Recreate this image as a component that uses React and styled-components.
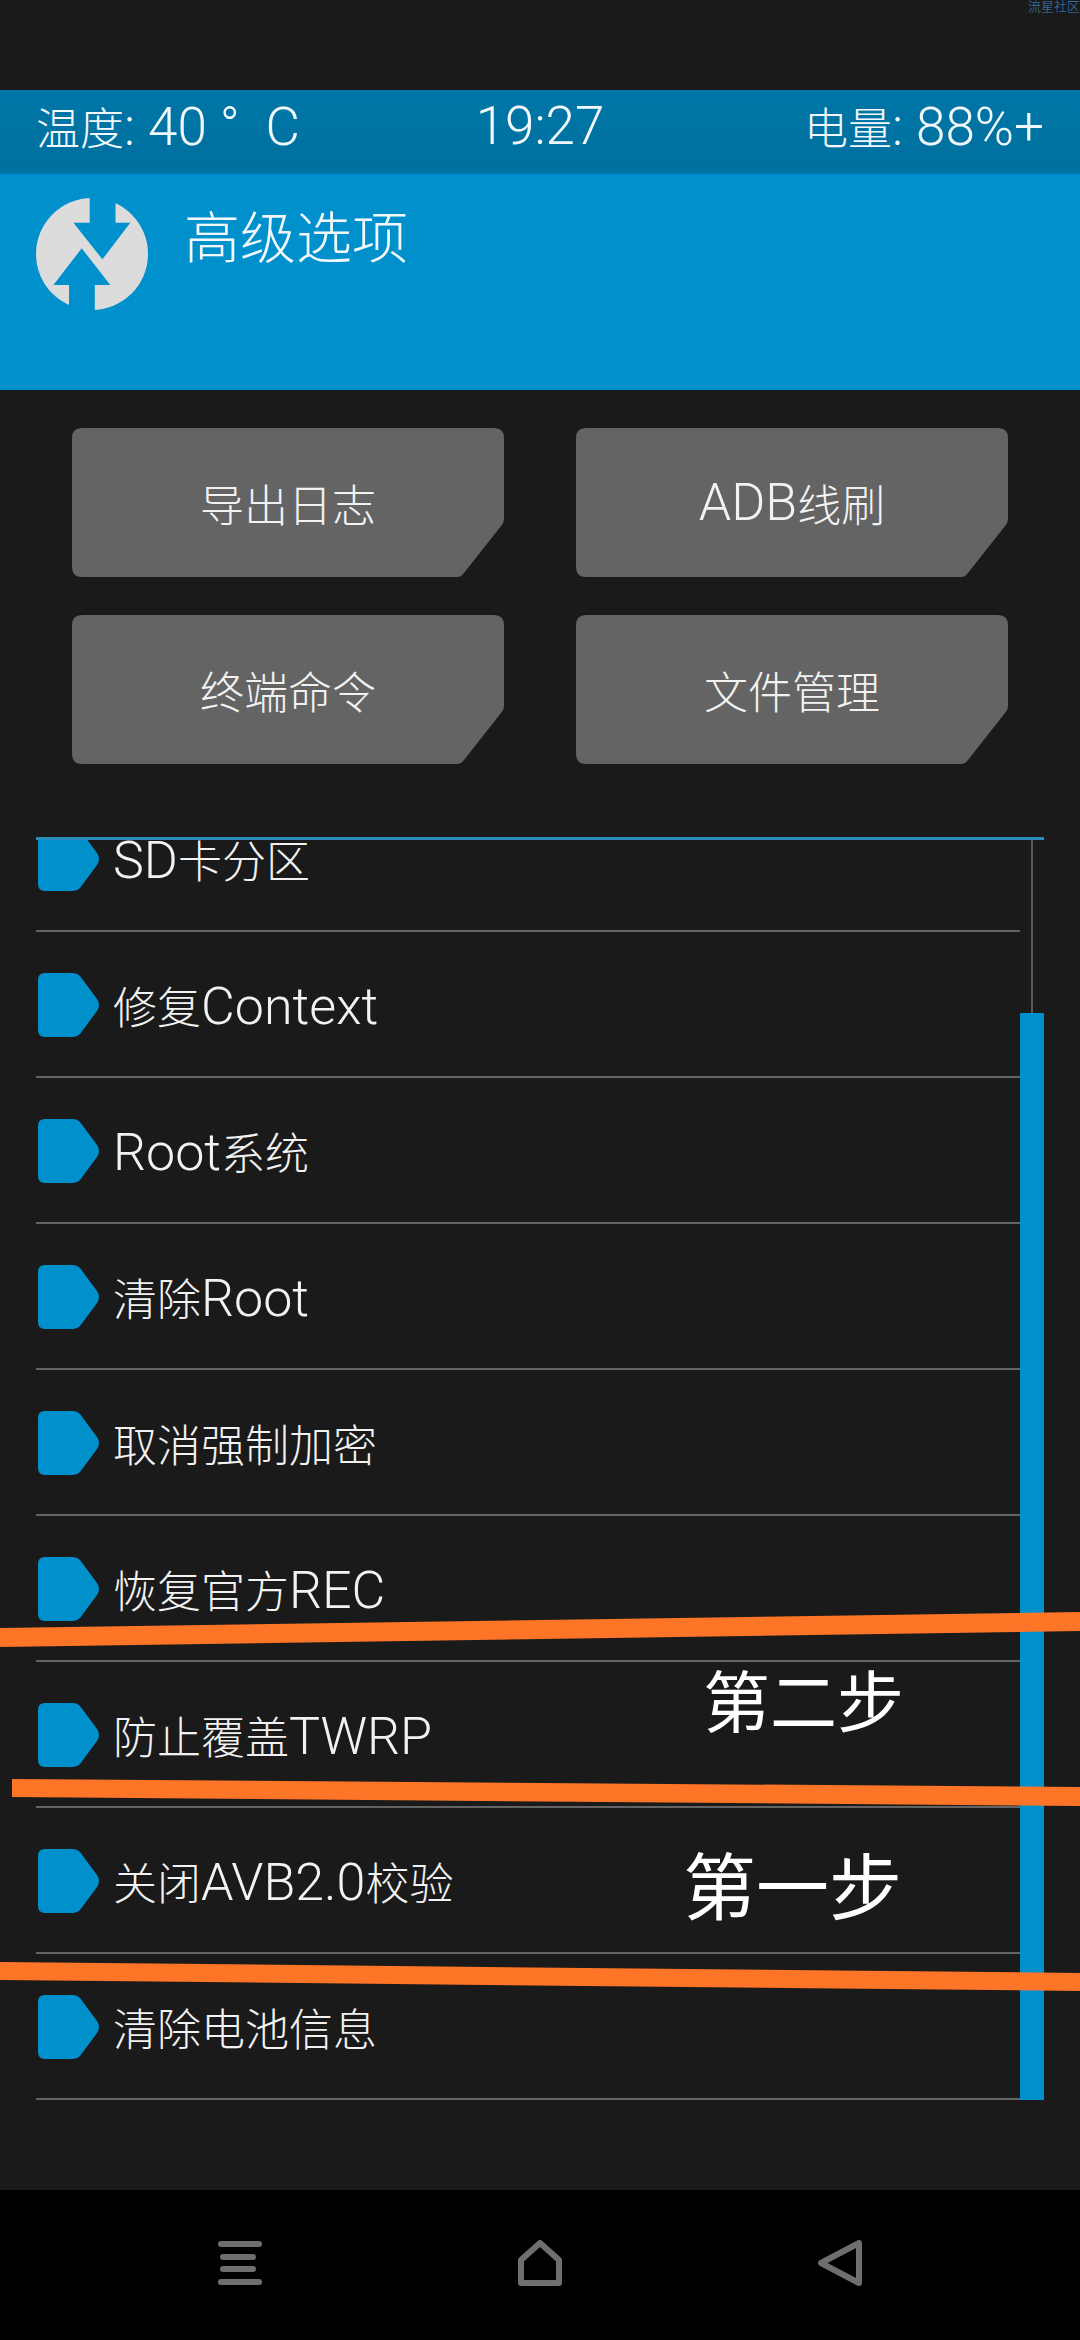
import React from "react";
import styled, { createGlobalStyle } from "styled-components";

const FONT = `Roboto, "Noto Sans CJK SC", sans-serif`;

const GlobalStyle = createGlobalStyle`
  html, body {
    margin: 0;
    background: #1a1a1a;
  }
  * {
    box-sizing: border-box;
  }
`;

const BUTTONS = ["导出日志", "ADB线刷", "终端命令", "文件管理"];
const ROWS = [
  "SD卡分区",
  "修复Context",
  "Root系统",
  "清除Root",
  "取消强制加密",
  "恢复官方REC",
  "防止覆盖TWRP",
  "关闭AVB2.0校验",
  "清除电池信息",
];

// the Chinese glyphs sit a little smaller than the latin ones in this theme
function Mixed({ text }) {
  return text
    .split(/([\u4e00-\u9fff]+)/)
    .filter(Boolean)
    .map((run, i) =>
      /[\u4e00-\u9fff]/.test(run) ? <Cjk key={i}>{run}</Cjk> : run
    );
}

function TwrpLogo() {
  return (
    <LogoSvg viewBox="0 0 112 112">
      <circle cx="56" cy="56" r="56" fill="#dcdcdc" />
      <path
        fill="#0090cc"
        d="M37.4 24.7 66.4 61.3 94.3 24.7H79.5V-2H53.7V24.7ZM45.7 50.3 74.3 87H58.8V114H33V87H17.4Z"
      />
    </LogoSvg>
  );
}

function RowIcon() {
  return (
    <RowIconSvg viewBox="0 0 62 64">
      <path
        fill="#0090cc"
        d="M7 0H35Q39 0 42 3L59 26Q63 32 59 38L42 61Q39 64 35 64H7Q0 64 0 57V7Q0 0 7 0Z"
      />
    </RowIconSvg>
  );
}

function MenuIcon() {
  return (
    <NavSvg viewBox="0 0 44 46">
      <g stroke="#6e6e6e" strokeWidth="6" strokeLinecap="round">
        <path d="M3 4H41" />
        <path d="M5 17H35" />
        <path d="M5 29H35" />
        <path d="M3 42H41" />
      </g>
    </NavSvg>
  );
}

function HomeIcon() {
  return (
    <NavSvg viewBox="0 0 44 46">
      <path
        d="M22 3 41 20V43H3V20Z"
        fill="none"
        stroke="#6e6e6e"
        strokeWidth="6"
        strokeLinejoin="round"
      />
    </NavSvg>
  );
}

function BackIcon() {
  return (
    <NavSvg viewBox="0 0 44 46">
      <path
        d="M41 3V43L3 23Z"
        fill="none"
        stroke="#6e6e6e"
        strokeWidth="6"
        strokeLinejoin="round"
      />
    </NavSvg>
  );
}

export default function App() {
  return (
    <>
      <GlobalStyle />
      <Screen>
        <Watermark>流星社区</Watermark>
        <StatusBar>
          <StatusText><Mixed text="温度: 40 °  C" /></StatusText>
          <StatusText $align="center">19:27</StatusText>
          <StatusText $align="right"><Mixed text="电量: 88%+" /></StatusText>
        </StatusBar>
        <Header>
          <TwrpLogo />
          <Title>高级选项</Title>
        </Header>
        <ButtonGrid>
          {BUTTONS.map((label) => (
            <ActionButton key={label}><Mixed text={label} /></ActionButton>
          ))}
        </ButtonGrid>
        <ListFrame>
          <ListViewport>
            <ListScroll>
              {ROWS.map((label) => (
                <Row key={label}>
                  <RowIcon />
                  <RowLabel><Mixed text={label} /></RowLabel>
                </Row>
              ))}
            </ListScroll>
          </ListViewport>
          <ScrollTrack>
            <ScrollThumb />
          </ScrollTrack>
        </ListFrame>
        <NavBar>
          <MenuIcon />
          <HomeIcon />
          <BackIcon />
        </NavBar>

        {/* orange annotations drawn over the screenshot */}
        <Annotations viewBox="0 0 1080 2340">
          <polygon fill="#ff7527" points="0,1628 1080,1612 1080,1631 0,1647" />
          <polygon fill="#ff7527" points="12,1779 1080,1787 1080,1806 12,1797" />
          <polygon fill="#ff7527" points="0,1962 1080,1973 1080,1991 0,1980" />
        </Annotations>
        <StepNote $top={1664} $right={176} $size={67}>第二步</StepNote>
        <StepNote $top={1846} $right={178} $size={73}>第一步</StepNote>
      </Screen>
    </>
  );
}

const Screen = styled.div`
  position: relative;
  width: 1080px;
  height: 2340px;
  overflow: hidden;
  display: flex;
  flex-direction: column;
  padding-top: 90px;
  background: #1a1a1a;
  font-family: ${FONT};
  font-weight: 300;
`;

const Cjk = styled.span`
  font-size: 44px;
`;

const Watermark = styled.span`
  position: absolute;
  top: 0;
  right: 0;
  font-size: 13px;
  line-height: 14px;
  color: #3c80bd;
`;

const StatusBar = styled.div`
  height: 84px;
  display: grid;
  grid-template-columns: 1fr 1fr 1fr;
  align-items: center;
  padding: 0 36px 12px;
  background: linear-gradient(#0077a7, #00709f 90%, #0077a8);
`;

const StatusText = styled.span`
  font-size: 53px;
  color: #f2f8fb;
  white-space: pre;
  text-align: ${(p) => p.$align || "left"};
`;

const Header = styled.div`
  height: 216px;
  display: flex;
  align-items: flex-start;
  padding: 24px 36px 0;
  background: #0090cc;
`;

const LogoSvg = styled.svg`
  width: 112px;
  height: 112px;
  flex: none;
`;

const Title = styled.h1`
  margin: 9px 0 0 36px;
  font-size: 56px;
  line-height: 64px;
  font-weight: 300;
  color: #f2f8fb;
`;

const ButtonGrid = styled.div`
  display: grid;
  grid-template-columns: 432px 432px;
  grid-auto-rows: 149px;
  gap: 38px 72px;
  padding: 38px 72px 0;
`;

const ActionButton = styled.div`
  display: flex;
  align-items: center;
  justify-content: center;
  white-space: pre;
  background: #646464;
  color: #f2f2f2;
  font-size: 52px;
  clip-path: path("M10 0H422Q432 0 432 10V91Q432 95 429 98L392 145Q389 149 385 149H10Q0 149 0 139V10Q0 0 10 0Z");
`;

const ListFrame = styled.div`
  height: 1263px;
  margin: 73px 36px 0;
  display: flex;
  border-top: 3px solid #2a8bbd;
`;

const ListViewport = styled.div`
  flex: 1;
  overflow: hidden;
`;

const ListScroll = styled.div`
  margin-top: -54px;
`;

const Row = styled.div`
  height: 146px;
  padding-top: 2px;
  display: flex;
  align-items: center;
  border-bottom: 2px solid #646464;
`;

const RowIconSvg = styled.svg`
  width: 64px;
  height: 64px;
  flex: none;
  margin-left: 1px;
`;

const RowLabel = styled.span`
  margin-left: 12px;
  font-size: 52px;
  color: #f2f2f2;
`;

const ScrollTrack = styled.div`
  width: 24px;
  flex: none;
  display: flex;
  flex-direction: column;
  justify-content: flex-end;
  background: linear-gradient(#5a5a5a, #5a5a5a) center / 2px 100% no-repeat;
`;

const ScrollThumb = styled.div`
  height: 1087px;
  background: #0090cc;
`;

const NavBar = styled.div`
  height: 150px;
  margin-top: 90px;
  padding: 50px 218px 0 218px;
  display: flex;
  justify-content: space-between;
  align-items: flex-start;
  background: #000000;
`;

const NavSvg = styled.svg`
  width: 44px;
  height: 46px;
`;

const Annotations = styled.svg`
  position: absolute;
  top: 0;
  left: 0;
  width: 1080px;
  height: 2340px;
  pointer-events: none;
`;

const StepNote = styled.span`
  position: absolute;
  top: ${(p) => p.$top}px;
  right: ${(p) => p.$right}px;
  font-size: ${(p) => p.$size}px;
  font-weight: 400;
  line-height: 1.2;
  color: #ffffff;
`;
